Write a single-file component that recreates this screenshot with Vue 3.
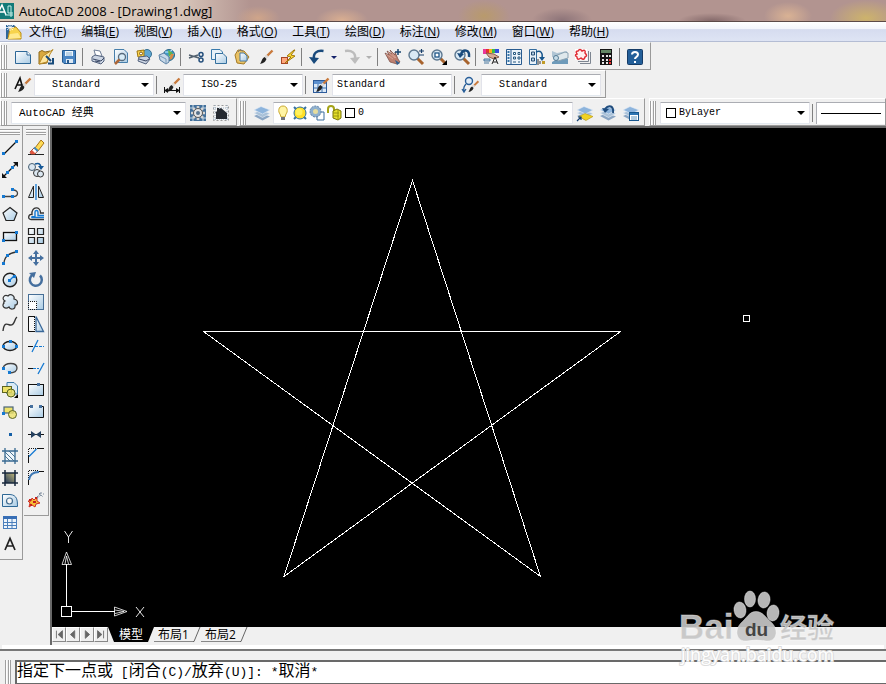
<script setup>
import { ref } from 'vue'

const menus = [
  ['文件', 'F'], ['编辑', 'E'], ['视图', 'V'], ['插入', 'I'], ['格式', 'O'], ['工具', 'T'],
  ['绘图', 'D'], ['标注', 'N'], ['修改', 'M'], ['窗口', 'W'], ['帮助', 'H'],
]

// Shared fragments for the icon set; every icon lives on a 16 x 16 grid.
const knob = (x, y) => `<rect x="${x}" y="${y}" width="3" height="3" fill="#1479d2"/>`
const brush = '<path d="M15.5 1.5L9 8" stroke="#c97a3c" stroke-width="2.4"/><path d="M10.5 6.5L8 9" stroke="#ddd" stroke-width="2.4"/><path d="M9.500 10C8 14 5 14.500 3 15C5 12.500 4.500 9.500 7.500 8z" fill="#222"/>'
const layers = '<path d="M0 11L7 8L16 11.500L8.500 15.500z" fill="#8aa5c3"/><path d="M0 8L7 5L16 8.500L8.500 12.500z" fill="#a9c1d8" stroke="#e7eff7" stroke-width=".6"/><path d="M0 5L7 1.500L16 5L8.500 9z" fill="#8db4dc" stroke="#e7eff7" stroke-width=".6"/>'
const lens = '<path d="M9 9L15 15" stroke="#a8642e" stroke-width="3"/><circle cx="6" cy="6" r="5" fill="#d9e9f5" stroke="#5d7890" stroke-width="1.400"/>'

const icons = {
  new: '<path d="M.5 2.500H12L15.500 6V14.500H.5z" fill="url(#paper)" stroke="#2d6797"/><path d="M12 2.500V6H15.500" fill="#fff" stroke="#2d6797"/>',
  open: '<path d="M1 3L4 1.500L7 3L12 2L9 14L1 15z" fill="#d9a93f" stroke="#8f6a1c"/><path d="M1 15L5 7L15 .500L12 5L9 13z" fill="#ffe7a0" stroke="#b78927"/><path d="M8 7L13 12M15 9V14.500H10" fill="none" stroke="#174a7a" stroke-width="2"/>',
  save: '<path d="M1.500 1.500H14.500V14.500H3L1.500 13z" fill="#4a86c4" stroke="#235a91"/><path d="M4 2H12V7H4z" fill="#eef6fc"/><path d="M5 4H11M5 6H11" stroke="#8ab0d1"/><path d="M5 10H12V14H5z" fill="#dce8f3"/><path d="M6 11H8V14H6z" fill="#285a8d"/>',
  print: '<path d="M4 1L10 2L12 7L6 8z" fill="#fff" stroke="#6e7d96"/><path d="M2 8L5 6L14 8V12L11 15L2 12z" fill="#ccd5e3" stroke="#53627d"/><path d="M3 10L11 12L14 9M5 12L10 13" stroke="#394764" fill="none"/>',
  preview: '<path d="M1.500 .5H11L14.500 4V13.500H1.500z" fill="url(#paper)" stroke="#477fab"/><circle cx="9" cy="8" r="3.500" fill="#d9edf8" stroke="#576b7d" stroke-width="1.300"/><path d="M6.500 10.500L2 15" stroke="#ad6738" stroke-width="2.500"/>',
  publish: '<circle cx="11" cy="5" r="4.500" fill="#5fa7d1" stroke="#356e91"/><path d="M1 2L8 1V8H2z" fill="#ffd64e" stroke="#9c750e"/><circle cx="5" cy="4.500" r="1.500" fill="#fff" stroke="#7b5a10"/><path d="M3 8L11 7L14 10L10 15L2 12z" fill="#ccd5e3" stroke="#53627d"/><path d="M3 10L10 12L13 10" fill="none" stroke="#394764"/>',
  web: '<circle cx="10" cy="6" r="5.500" fill="#3a9bcb" stroke="#286386"/><path d="M6 3Q11 4 13 1M5 7Q11 9 15 5" stroke="#cfefff" fill="none"/><path d="M9 1L14 4L10 8z" fill="#63b24d"/><path d="M12 5L15 5L13 10L10 11z" fill="#db8a44"/><path d="M0 6L5 4L10 8V13L7 15L1 11z" fill="#c8d9e9" stroke="#5b80a4"/><path d="M1 7L7 10V15" fill="none" stroke="#7698b8"/>',
  cut: '<path d="M1 6L11 9M1 9L10 6" stroke="#52616e" stroke-width="1.500"/><circle cx="13" cy="5.500" r="2" fill="none" stroke="#254f7b" stroke-width="1.500"/><circle cx="13" cy="11" r="2" fill="none" stroke="#254f7b" stroke-width="1.500"/>',
  copy: '<path d="M.5 .5H9L11.500 3V10.500H.5z" fill="#e8f2f8" stroke="#397aac"/><path d="M4.500 4.500H12L15.500 8V14.500H4.500z" fill="url(#paper)" stroke="#34709e"/>',
  paste: '<path d="M4 1L10 2L15 8L10 15L3 14L1 6z" fill="#e9c163" stroke="#a47a24"/><path d="M6 4H10L13 7V12L6 12z" fill="url(#paper)" stroke="#487ba6"/><path d="M4 3L6 .500L9 2" stroke="#777" fill="none"/>',
  match: brush,
  blockedit: '<rect x="1.500" y="8.500" width="6" height="6" fill="#ffa77c" stroke="#a84625"/><path d="M14 1L7 7L11 8L5 14L15 7L11 6L15 1z" fill="#ffdf36" stroke="#a2770b"/>',
  undo: '<path d="M14.500 2C8 1 4 4 5 10" fill="none" stroke="#194a7c" stroke-width="2.500"/><path d="M0 8L10 9L5 15z" fill="#194a7c"/>',
  redo: '<path d="M1 2C8 1 12 4 11 10" fill="none" stroke="#bcbcbc" stroke-width="2.500"/><path d="M6 9L16 8L11 15z" fill="#bcbcbc"/>',
  pan: '<path d="M0 4L4 6L2 2L7 5L5 1L10 6L10 3L13 10L15 13L12 15L5 13z" fill="#bd8070" stroke="#76483f" stroke-width=".7"/><path d="M1 5L8 10M3 3L10 9M6 3L11 9" stroke="#e3b1a2" stroke-width=".7"/><path d="M10 11L15 14L12 16z" fill="#315e8d"/><path d="M13 0V6M10 3H16" stroke="#18466f" stroke-width="1.500"/>',
  zoomrt: lens + '<path d="M11 2H16M13.500 0V4M11 6H16" stroke="#173c68" stroke-width="1.200"/>',
  zoomwin: lens + '<rect x="4" y="4" width="4" height="4" fill="#fff" stroke="#205687" stroke-width="1.300"/><path d="M16 11V16H11z" fill="#000"/>',
  zoomprev: lens + '<path d="M15 8C16 0 9 0 7 5" fill="none" stroke="#194a7c" stroke-width="2.500"/><path d="M3 4L10 5L6 9z" fill="#194a7c"/>',
  props: '<path d="M0 0H3V5H0z" fill="#e9369b"/><path d="M3 0H6V5H3z" fill="#e63131"/><path d="M6 0H9V4H6z" fill="#ffb019"/><path d="M9 0H12V4H9z" fill="#38bf49"/><path d="M12 0H16V4H12z" fill="#334ee0"/><path d="M3 4L11 5L16 8L11 10L6 8z" fill="#dbaa93" stroke="#885c4b"/><path d="M1 10H7V12H1zM1 14H6" fill="#b7d0e6" stroke="#48779d"/><path d="M9 15L12 8L15 15M10 13H14" fill="none" stroke="#222"/>',
  center: '<path d="M.5 .5H15.500V15.500H.5z" fill="#edf4fa" stroke="#285b8f"/><path d="M2.500 2V14" stroke="#3775a8" stroke-width="2" stroke-dasharray="2 1"/><path d="M5 .5V15" stroke="#285b8f"/><path d="M7.500 3.500H9.500V5.500H7.500zM12 3.500H14V5.500H12zM7.500 8H9.500V10H7.500zM12 8H14V10H12zM7 13H10M12 13H14" fill="#fff" stroke="#24577e"/>',
  palettes: '<path d="M.5 .5H7.500V15.500H.5z" fill="#e8f1f9" stroke="#346c9e"/><path d="M2.500 3H5.500V6H2.500zM2.500 9H5.500V12H2.500z" fill="#b7cee2" stroke="#254c73"/><path d="M7 3C12 1 14 4 13 9" fill="none" stroke="#18578d" stroke-width="1.500"/><path d="M10 8H16L13 12z" fill="#18578d"/><path d="M9 10V16M11 12V15" stroke="#333"/><rect x="13" y="12" width="3" height="3" fill="#c19b26"/>',
  sheets: '<path d="M0 2L5 4L15 2V8L9 11L0 8z" fill="#b0c5d4"/><path d="M0 13L9 8L16 10V15H0z" fill="#6f9bba"/><path d="M3 7L13 3L16 4V9L6 12z" fill="#dfe8ec" stroke="#8aa2b2"/><circle cx="4" cy="9" r="2.500" fill="#c7dce8" stroke="#577d96"/>',
  markup: '<path d="M5 14.500H15.500V3M3 12.500H13.500V2" stroke="#7d8590" fill="none"/><rect x="0" y="0" width="12" height="11" fill="#fff"/><path d="M3 2Q5-1 7 2Q11 0 10 4Q13 7 10 8Q9 12 6 9Q2 12 2 8Q-1 6 2 5Q0 2 3 2z" fill="#fff1f0" stroke="#e02e35" stroke-width="1.500"/>',
  calc: '<rect x="2" y="0" width="12" height="16" fill="#151515"/><rect x="3" y="1" width="10" height="3" fill="#638865"/><path d="M4 6H6V8H4zM8 6H10V8H8zM11 6H13V8H11zM4 10H6V12H4zM8 10H10V12H8zM4 13H6V15H4zM8 13H10V15H8z" fill="#e8e8e8"/><path d="M11 10H13V12H11zM11 13H13V15H11z" fill="#e33"/>',
  help: '<rect x=".5" y=".5" width="15" height="15" rx="1" fill="#235f99" stroke="#153b66"/><path d="M5 5.500C5 2 11 2 11 5.500C11 8 8 8 8 10" fill="none" stroke="#fff" stroke-width="2"/><rect x="7" y="12" width="2" height="2" fill="#fff"/>',
  textstyle: '<path d="M0 12L5 1L8 12M2 8H8" fill="none" stroke="#111" stroke-width="1.600"/>' + brush,
  dimstyle: brush + '<path d="M0 13.500H16M.5 10V16M15.500 10V16" stroke="#111"/><path d="M0 13.500L4 11V16zM16 13.500L12 11V16z" fill="#111"/>',
  tablestyle: '<rect x=".5" y="3.500" width="13" height="12" fill="#dbe9f7" stroke="#2d5c9b"/><path d="M1 4H13V7H1z" fill="#5d91d0"/><path d="M1 11H13M5 7V15M9 7V15" stroke="#3e72ae"/>' + brush,
  leaderstyle: '<circle cx="7" cy="4" r="3.500" fill="#e2edf7" stroke="#285e98" stroke-width="1.400"/><path d="M4 7Q1 10 2 14M0 12L2 15L4 12" fill="none" stroke="#285e98" stroke-width="1.300"/><g transform="translate(4 3) scale(.8)">' + brush + '</g>',
  gear: '<rect width="16" height="16" fill="#43709b"/><path d="M0 3H3V0M13 0V3H16M0 13H3V16M13 16V13H16" stroke="#c5d8e6" fill="none"/><path d="M8 1V15M1 8H15M3 3L13 13M13 3L3 13" stroke="#d5d5d5" stroke-width="2.600"/><circle cx="8" cy="8" r="4.500" fill="#e4e4e4" stroke="#555"/><circle cx="8" cy="8" r="2" fill="#56718c"/>',
  home: '<rect x=".5" y=".5" width="15" height="15" fill="#f4f4f4" stroke="#9a9a9a" stroke-dasharray="2 2"/><path d="M2 0V16M14 0V16M0 3H16M0 14H16" stroke="#9fb2c4" stroke-dasharray="1 1"/><path d="M2 8L4 6V3H6V4L8 3L14 8V14H3V8z" fill="#252a31"/>',
  layers,
  layercur: layers + '<path d="M2 11.500L8 8.500L16 11.500L9 15.500z" fill="#f0d223" stroke="#b49308" stroke-width=".5"/><path d="M0 16L4 12M1 12H4V15" stroke="#123f72" fill="none" stroke-width="1.200"/>',
  layerprev: layers + '<path d="M13 8C14 1 9-1 5 4" stroke="#204d7e" stroke-width="2" fill="none"/><path d="M2 3L9 4L5 8z" fill="#204d7e"/>',
  layerstates: layers + '<rect x="6.500" y="7.500" width="9" height="8" fill="#fff" stroke="#16568d"/><path d="M7 8H15V10H7z" fill="#2d75b3"/><path d="M8 12H14M8 14H14" stroke="#6095be"/>',
  bulb: '<path d="M8 1C3 1 3 7 5 9L6 12H10L11 9C13 7 13 1 8 1z" fill="#fff4a4" stroke="#c9a830"/><path d="M6 12H10V15H6z" fill="#70737b"/>',
  sun: '<path d="M2 2L14 14M14 2L2 14" stroke="#3470a1" stroke-width="2"/><circle cx="8" cy="8" r="6" fill="#ffdf27" stroke="#2f719e"/><circle cx="7" cy="7" r="3.500" fill="#fff25c"/>',
  freeze: '<path d="M9 7H15V15H8V11" fill="#fff" stroke="#3b6d9d"/><circle cx="6.500" cy="6.500" r="5.500" fill="#8fb0ce" stroke="#5d82a7" stroke-dasharray="2 1"/><circle cx="6.500" cy="6.500" r="2.500" fill="#e6dd9d"/>',
  lock: '<path d="M2 8V4C2 0 8 0 8 4V9" fill="none" stroke="#a5a318" stroke-width="2"/><path d="M7 6L11 4L15 6V13L12 15L7 13z" fill="#e6df2d" stroke="#78740b"/><path d="M7 8H13M7 11H13M12 5V15" stroke="#9a9613"/>',
  line: '<path d="M2 14L14 2" stroke="#111" stroke-width="1.300"/>' + knob(0, 12) + knob(13, 0),
  xline: '<path d="M1 15L15 1" stroke="#111" stroke-width="1.300"/><path d="M0 16V11L5 16zM16 0V5L11 0z" fill="#111"/>' + knob(4, 9) + knob(9, 4),
  pline: '<path d="M2 12.500H11C17 12.500 17 6 11 6" fill="none" stroke="#444" stroke-width="1.300"/>' + knob(0, 11) + knob(9, 11) + knob(9, 4),
  polygon: '<path d="M8 1.500L15 7L12 14.500H4L1 7z" fill="url(#paper)" stroke="#222" stroke-width="1.200"/>',
  rect: '<rect x="1.500" y="4.500" width="13" height="8" fill="url(#paper)" stroke="#111" stroke-width="1.300"/>' + knob(0, 11) + knob(13, 3),
  arc: '<path d="M2 14Q2 4 14 2" fill="none" stroke="#333" stroke-width="1.300"/>' + knob(0, 12) + knob(4, 4) + knob(13, 0),
  circle: '<circle cx="8" cy="8" r="6.800" fill="url(#paper)" stroke="#222" stroke-width="1.400"/><path d="M8 8L12 4" stroke="#1479d2" stroke-width="1.300"/>' + knob(6, 7) + knob(11, 3),
  cloud: '<path d="M3 7C-1 5 2 0 6 2C9-1 13 2 12 5C17 6 16 11 13 11C14 16 8 16 7 13C3 16-1 12 2 9Q1 8 3 7z" fill="url(#paper)" stroke="#333" stroke-width="1.200"/>',
  spline: '<path d="M1 15C2 6 5 8 8 9C13 10 12 3 15 1" fill="none" stroke="#333" stroke-width="1.400"/>',
  ellipse: '<ellipse cx="8" cy="8" rx="7" ry="4.500" fill="url(#paper)" stroke="#222" stroke-width="1.400"/>' + knob(0, 7) + knob(7, 2) + knob(13, 7),
  elarc: '<path d="M1 8C3 2 15 2 15 8C15 12 12 13 7 13" fill="url(#paper)" stroke="#444" stroke-width="1.300"/>' + knob(0, 7) + knob(6, 11),
  insert: '<path d="M5 .5H12L15.500 4V12H5z" fill="#d9eaf6" stroke="#3979a8"/><rect x=".5" y="4.500" width="9" height="6" fill="#ede269" stroke="#5d6420"/><circle cx="9" cy="11" r="4" fill="#e6dc63" fill-opacity=".85" stroke="#53621c"/><path d="M16 12V16H12z" fill="#000"/>',
  block: '<rect x="2" y="3" width="9" height="6" fill="#eee269" stroke="#496477" stroke-width="1.200"/><circle cx="10.500" cy="10.500" r="4" fill="#eee269" fill-opacity=".8" stroke="#5c6525"/>' + knob(0, 8),
  point: '<rect x="7" y="7" width="3" height="3" fill="#155fa7"/>',
  hatch: '<rect x="3" y="3" width="10" height="10" fill="#eef5fa"/><path d="M3 8L8 13M3 4L12 13M7 3L13 9" stroke="#4c7493"/><path d="M3 0V16M13 0V16M0 3H16M0 13H16" stroke="#386a92" stroke-width="1.300"/>',
  gradient: '<rect x="3" y="3" width="10" height="10" fill="url(#dusk)"/><path d="M3 0V16M13 0V16M0 3H16M0 13H16" stroke="#18283d" stroke-width="1.500"/>',
  region: '<path d="M.5 2.500H8C15 3 15.500 8 15.500 14.500H.5z" fill="url(#paper)" stroke="#2e6896"/><circle cx="7.500" cy="9" r="3" fill="#f7f7f7" stroke="#446e91" stroke-width="1.200"/>',
  table: '<rect x="1.500" y="2.500" width="13" height="12" fill="#edf4fb" stroke="#4b7fbc"/><path d="M1 2H15V5H1z" fill="#376eb5"/><path d="M1 8.500H15M1 11.500H15M5.500 5V15M10 5V15" stroke="#4b7fbc"/>',
  mtext: '<path d="M3 14L8 2.500L13 14M5 10H11" fill="none" stroke="#222" stroke-width="1.700"/>',
  erase: '<path d="M0 14.500H16" stroke="#222"/><path d="M7 8L13 0L16 3L10 11z" fill="#ffdb55" stroke="#a77417"/><path d="M2 12L6 8L9.500 11L7 14H3z" fill="#fff" stroke="#9c4a3b"/><path d="M2 12L4 10L7.500 13.500L7 14H3z" fill="#e0563f"/><path d="M6 7.500L10 11" stroke="#4189bc" stroke-width="2"/>',
  copyobj: '<circle cx="4" cy="5" r="3.500" fill="#dbe7f1" stroke="#475f73"/><circle cx="9" cy="11" r="3.500" fill="#dbe7f1" stroke="#333"/><circle cx="12.500" cy="12" r="3" fill="#dbe7f1" stroke="#333"/><path d="M7 2Q12 0 13 5" fill="none" stroke="#145796" stroke-width="1.500"/><path d="M10 4H16L13 8z" fill="#145796"/>',
  mirror: '<path d="M5.500 2V13.500H.5zM10.500 2V13.500H15.500z" fill="url(#paper)" stroke="#222"/><path d="M8 0V16" stroke="#1479d2" stroke-width="1.300"/>',
  offset: '<path d="M16 13.500H3C-.5 13.500 0 8 4 8.500C3 0 13 0 12.500 7H16" fill="none" stroke="#333" stroke-width="1.300"/><path d="M16 11.500H4C3 10.500 5 10.500 7 10.500V6C7 4 10 4 10 6V9.500H16" fill="none" stroke="#1479d2" stroke-width="1.400"/>',
  array: '<path d="M.5 .5H6.500V6.500H.5zM9.500 .5H15.500V6.500H9.500zM.5 9.500H6.500V15.500H.5zM9.500 9.500H15.500V15.500H9.500z" fill="url(#paper)" stroke="#222" stroke-width="1.200"/>',
  move: '<path d="M8 0L11 4H9V7H12V5L16 8L12 11V9H9V12H11L8 16L5 12H7V9H4V11L0 8L4 5V7H7V4H5z" fill="#456f9e"/>',
  rotate: '<path d="M5 2.500A6 6 0 1 0 12 3.500" fill="none" stroke="#456f9e" stroke-width="2.500"/><path d="M1 1L8 0L6 6z" fill="#456f9e"/>',
  scale: '<rect x=".5" y=".5" width="15" height="15" fill="url(#paper)" stroke="#466e96"/><path d="M.5 7.500H8.500V15.500H.5z" fill="#fff" stroke="#111" stroke-dasharray="1 1" stroke-dashoffset=".5"/>',
  stretch: '<path d="M8 .5L15.500 15.500H8z" fill="url(#paper)" stroke="#396798" stroke-width="1.300"/><path d="M7 .5H.5V15.500H7" fill="#f8f8f8" stroke="#111"/><path d="M6.500 1V15" stroke="#111" stroke-dasharray="1 1"/>',
  trim: '<path d="M0 8.500H5" stroke="#111"/><path d="M7 8.500H16" stroke="#1479d2" stroke-dasharray="3 1"/><path d="M4 14L10 2" stroke="#1479d2" stroke-width="1.300"/>',
  extend: '<path d="M0 8.500H5" stroke="#111"/><path d="M5 8.500H11" stroke="#1479d2" stroke-dasharray="3 1"/><path d="M10 14L16 3" stroke="#1479d2" stroke-width="1.300"/>',
  breakpt: '<rect x=".5" y="2.500" width="15" height="11" fill="url(#paper)" stroke="#111"/><rect x="9" y="1" width="3" height="3" fill="#456f9e"/>',
  break: '<path d="M3 2.500H.5V13.500H15.500V2.500H13" fill="url(#paper)" stroke="#111"/><path d="M2 1H5V4H2zM11 1H14V4H11z" fill="#456f9e"/>',
  join: '<path d="M0 8.500H16" stroke="#111"/><path d="M3 5L8 8.500L3 12zM13 5L8 8.500L13 12z" fill="#24405f"/>',
  chamfer: '<path d="M.5 15V8M9 .5H16" stroke="#111"/><path d="M.5 8V.5H9" stroke="#111" fill="none" stroke-dasharray="1 1"/><path d="M1 8.500L8.500 1" stroke="#1479d2" stroke-width="1.300"/>',
  fillet: '<path d="M.5 15V9M11 1.500H16" stroke="#111"/><path d="M.5 8V.5H10" stroke="#111" fill="none" stroke-dasharray="1 1"/><path d="M1 10Q2 2 11 2" stroke="#3d78b5" stroke-width="2" fill="none"/>',
  explode: '<path d="M4 6L6 8L9 5L9 9L12 11L8 12L7 15L4 13L1 15L2 11L0 9L3 9z" fill="#f5bd35" stroke="#cf2d25"/><path d="M1 7H3V9H1zM5 9H8V11H5zM2 12H4V14H2zM7 5H9V7H7z" fill="#c61f1f"/><path d="M9 5L13 1M11 1L15 5M9 6L13 3M13 0V2M15 2H16" stroke="#7c8b9d" stroke-dasharray="2 1"/>',
}

const standardBar = [
  ['new', 'open', 'save'],
  ['print', 'preview', 'publish', 'web'],
  ['cut', 'copy', 'paste', 'match', 'blockedit'],
  ['undo', 'caret', 'redo', 'caret-off'],
  ['pan', 'zoomrt', 'zoomwin', 'zoomprev'],
  ['props', 'center', 'palettes', 'sheets', 'markup', 'calc'],
  ['help'],
]
const styleBar = [
  { icon: 'textstyle', label: '文字样式', value: 'Standard', inset: true },
  { icon: 'dimstyle', label: '标注样式', value: 'ISO-25', inset: true },
  { icon: 'tablestyle', label: '表格样式', value: 'Standard', inset: false },
  { icon: 'leaderstyle', label: '多重引线样式', value: 'Standard', inset: true },
]
const drawTools = ['line', 'xline', 'pline', 'polygon', 'rect', 'arc', 'circle', 'cloud', 'spline', 'ellipse', 'elarc', 'insert', 'block', 'point', 'hatch', 'gradient', 'region', 'table', 'mtext']
const modifyTools = ['erase', 'copyobj', 'mirror', 'offset', 'array', 'move', 'rotate', 'scale', 'stretch', 'trim', 'extend', 'breakpt', 'break', 'join', 'chamfer', 'fillet', 'explode']
const layerFlags = ['bulb', 'sun', 'freeze', 'lock']

const pagers = ['M4 2V11M11 2L6 6.500L11 11z', 'M9 2L4 6.500L9 11z', 'M5 2L10 6.500L5 11z', 'M3 2L8 6.500L3 11zM10 2V11']
const layouts = ['布局1', '布局2']
const activeTab = ref('模型')
</script>

<template>
  <div class="app">
    <header class="title">
      <svg class="logo" viewBox="0 0 14 16" aria-hidden="true">
        <rect width="14" height="16" fill="#127a78" />
        <path d="M-3 12L2 2L6 12M-1 9H5" fill="none" stroke="#fff" stroke-width="1.500" />
        <path d="M8 3V10H13M8 3H11V14M5 12H13" fill="none" stroke="#c5f0e8" />
      </svg>
      <h1>AutoCAD 2008 - [Drawing1.dwg]</h1>
    </header>

    <nav class="menu">
      <svg class="doc" viewBox="0 0 16 16" aria-hidden="true">
        <path d="M0 1H8L12 5V15H0z" fill="#2d659a" />
        <path d="M4 4L10 3L15 9V15H2z" fill="#f7d34c" stroke="#bb8c16" />
        <path d="M2 15L4 10L12 9L15 14z" fill="#ffe98d" />
        <path d="M4 0V7M0 3.500H8M1 1L7 6M7 1L1 6" stroke="#fff" stroke-width=".8" />
      </svg>
      <button v-for="[name, key] in menus" :key="key" type="button">{{ name }}(<u>{{ key }}</u>)</button>
    </nav>

    <div class="bars">
      <div class="row">
        <div class="bar">
          <i class="grip"></i>
          <div v-for="(group, g) in standardBar" :key="g" class="group">
            <template v-for="name in group" :key="name">
              <button v-if="name.startsWith('caret')" type="button" class="caret" :class="{ off: name === 'caret-off' }" :aria-label="name"></button>
              <button v-else type="button" class="tool" :aria-label="name"><svg viewBox="0 0 16 16" v-html="icons[name]"></svg></button>
            </template>
          </div>
        </div>
      </div>

      <div class="row">
        <div class="bar">
          <i class="grip"></i>
          <div v-for="s in styleBar" :key="s.icon" class="group">
            <button type="button" class="tool" :aria-label="s.icon"><svg viewBox="0 0 16 16" v-html="icons[s.icon]"></svg></button>
            <label class="combo style" :class="{ inset: s.inset }">
              <select :aria-label="s.label"><option>{{ s.value }}</option></select>
            </label>
          </div>
        </div>
      </div>

      <div class="row">
        <div class="bar">
          <i class="grip"></i>
          <label class="combo workspace"><select aria-label="工作空间"><option>AutoCAD 经典</option></select></label>
          <button type="button" class="tool" aria-label="工作空间设置"><svg viewBox="0 0 16 16" v-html="icons.gear"></svg></button>
          <button type="button" class="tool" aria-label="我的工作空间"><svg viewBox="0 0 16 16" v-html="icons.home"></svg></button>
        </div>
        <div class="bar layerbar">
          <i class="grip"></i>
          <button type="button" class="tool" aria-label="图层特性"><svg viewBox="0 0 16 16" v-html="icons.layers"></svg></button>
          <label class="combo layer">
            <select aria-label="图层"><option>0</option></select>
            <span class="flags">
              <svg v-for="f in layerFlags" :key="f" viewBox="0 0 16 16" v-html="icons[f]"></svg>
              <i class="swatch"></i>
            </span>
          </label>
          <button v-for="n in ['layercur', 'layerprev', 'layerstates']" :key="n" type="button" class="tool" :aria-label="n"><svg viewBox="0 0 16 16" v-html="icons[n]"></svg></button>
        </div>
        <div class="bar fill">
          <i class="grip"></i>
          <div class="group">
            <label class="combo color">
              <select aria-label="颜色"><option>ByLayer</option></select>
              <span class="flags"><i class="swatch"></i></span>
            </label>
          </div>
          <div class="group rest">
            <div class="linetype"></div>
          </div>
        </div>
      </div>
    </div>

    <main class="work">
      <div class="dock">
        <div v-for="(tools, i) in [drawTools, modifyTools]" :key="i" class="column">
          <i class="vgrip"></i>
          <button v-for="t in tools" :key="t" type="button" class="tool" :aria-label="t"><svg viewBox="0 0 16 16" v-html="icons[t]"></svg></button>
        </div>
      </div>

      <section class="viewport">
        <svg class="canvas" aria-label="Drawing1">
          <defs>
            <linearGradient id="paper" x1="0" y1="0" x2="1" y2="1"><stop offset="0" stop-color="#fff" /><stop offset="1" stop-color="#a9cbe4" /></linearGradient>
            <linearGradient id="dusk" x1="0" y1="1" x2="1" y2="0"><stop offset="0" stop-color="#203659" /><stop offset="1" stop-color="#c3b978" /></linearGradient>
          </defs>
          <g fill="none" stroke="#fff" shape-rendering="crispEdges">
            <path d="M360.500 52.500L232 448.500L568.500 203.500H151.500L488.500 448.500z" />
            <rect x="691.500" y="187.500" width="6" height="6" />
            <rect x="9.500" y="478.500" width="10" height="10" />
            <path d="M14.500 478V436M20 483.500H63" />
          </g>
          <g fill="none" stroke="#fff">
            <path d="M14.500 424L10 436.500H19.500zM13 436L14.500 428L16.500 436M75 483.500L62.500 479V488zM63 482L72 483.500L63 485.500" stroke-width=".8" />
            <path d="M12.500 403L16.500 409V415M20.500 403L16.500 409M84 479L92 489M92 479L84 489" stroke-width=".9" />
          </g>
        </svg>
        <div class="tabs">
          <button v-for="(d, i) in pagers" :key="i" type="button" class="pager" aria-label="翻页">
            <svg viewBox="0 0 14 13"><path :d="d" fill="#666" stroke="#666" /></svg>
          </button>
          <button type="button" class="model" @click="activeTab = '模型'">模型</button>
          <template v-for="t in layouts" :key="t">
            <button type="button" class="layout" @click="activeTab = t">{{ t }}</button>
            <svg class="slash" viewBox="0 0 8 15"><path d="M0 14.500H1L7 0" stroke="#666" fill="none" /></svg>
          </template>
        </div>
      </section>
    </main>

    <footer class="command">
      <i class="grip"></i>
      <p class="history">指定下一点或<code>&nbsp;[</code>闭合<code>(C)/</code>放弃<code>(U)]:&nbsp;*</code>取消<code>*</code></p>
    </footer>

    <svg class="watermark" viewBox="0 0 170 84">
      <g fill="#c6c6c6" fill-opacity=".92" stroke="#fff" stroke-opacity=".4">
        <ellipse cx="64" cy="21" rx="6" ry="8" transform="rotate(-8 64 21)" />
        <ellipse cx="74" cy="10" rx="5.500" ry="8" />
        <ellipse cx="88" cy="11" rx="6" ry="8" transform="rotate(8 88 11)" />
        <ellipse cx="97" cy="24" rx="6" ry="8" transform="rotate(8 97 24)" />
        <path d="M80 22.500C87 22.500 90 29 96 34C103 41 101 53 90 52Q80 50 71 52C60 53 58 41 65 34C71 29 73 22.500 80 22.500z" />
        <text x="3" y="50" class="wm-latin">Bai</text>
        <text x="104" y="49" class="wm-cjk">经验</text>
      </g>
      <text x="69" y="47" class="wm-du">du</text>
      <text x="5" y="72" class="wm-url">jingyan.baidu.com</text>
    </svg>
  </div>
</template>

<style>
body {
  margin: 0;
  background: #f0f0f0;
}
</style>

<style scoped>
.app {
  position: relative;
  display: flex;
  flex-direction: column;
  min-height: 100vh;
  overflow: hidden;
  background: #f0f0f0;
  color: #000;
  font: 12px/16px "Open Sans", "Noto Sans CJK SC", sans-serif;
}
button {
  margin: 0;
  padding: 0;
  border: 0;
  background: none;
  color: inherit;
  font: inherit;
}
svg {
  display: block;
}
.title {
  box-sizing: border-box;
  display: flex;
  align-items: center;
  gap: 5px;
  height: 22px;
  border-bottom: 1px solid #5c4a48;
  background:
    radial-gradient(ellipse 26px 12px at 342px 20px, #d9ae91, transparent),
    radial-gradient(ellipse 22px 12px at 258px 18px, #cfa58a, transparent),
    radial-gradient(ellipse 26px 16px at 484px 16px, #b89a6c, transparent),
    radial-gradient(ellipse 30px 12px at 562px 20px, #8d7479, transparent),
    radial-gradient(ellipse 34px 8px at 712px 21px, #84696a, transparent),
    radial-gradient(ellipse 24px 14px at 788px 16px, #d9b294, transparent),
    radial-gradient(ellipse 36px 18px at 866px 18px, #cdb36c, transparent),
    linear-gradient(90deg, #dccdbd, #d8c6ba 180px, #b29490 250px, #b29490);
}
.title h1 {
  margin: 0;
  font-size: 13px;
  font-weight: 400;
}
.logo {
  width: 14px;
  height: 16px;
}
.menu {
  box-sizing: border-box;
  display: flex;
  align-items: center;
  gap: 15px;
  height: 20px;
  padding-left: 6px;
  border-bottom: 1px solid #b4bdd4;
  background: linear-gradient(#fff, #f3f5fb 35%, #d6dcef 40%, #dee4f4);
  white-space: nowrap;
}
.doc {
  width: 16px;
  height: 16px;
  margin-right: -8px;
}
.row {
  display: flex;
  height: 28px;
}
.bar {
  box-sizing: border-box;
  display: flex;
  align-items: center;
  padding: 2px 4px 0 0;
  border: 1px solid;
  border-color: #fff #9a9a9a #9a9a9a #fff;
}
.bar.layerbar {
  margin-left: 2px;
  padding-right: 2px;
}
.bar.fill {
  flex: 1;
  margin-left: 4px;
  padding-right: 0;
}
.grip {
  box-sizing: border-box;
  flex: none;
  width: 6px;
  height: 24px;
  margin-right: 4px;
  border: solid #a0a0a0;
  border-width: 0 1px;
  background: linear-gradient(90deg, #fff 1px, #f0f0f0 1px 2px, #a0a0a0 2px 3px, #fff 3px);
}
.group {
  display: flex;
  align-items: center;
}
.group.rest {
  flex: 1;
}
.group + .group::before {
  content: "";
  width: 1px;
  height: 18px;
  margin: 0 3px 0 2px;
  background: #808080;
}
.tool {
  display: grid;
  flex: none;
  place-items: center;
  width: 23px;
  height: 22px;
}
.tool svg {
  width: 16px;
  height: 16px;
  overflow: visible;
}
.caret {
  display: grid;
  place-items: center;
  width: 12px;
  height: 22px;
}
.caret::after,
.combo::after {
  content: "";
  border: solid transparent;
  border-width: 4px 4px 0;
  border-top-color: #000;
}
.caret::after {
  border-width: 3px 3px 0;
  border-top-color: #15236b;
}
.caret.off::after {
  border-top-color: #b0b0b0;
}
.combo {
  display: grid;
  align-items: center;
}
.combo::after {
  grid-area: 1 / 1;
  justify-self: end;
  margin-right: 5px;
  pointer-events: none;
}
.combo select {
  grid-area: 1 / 1;
  box-sizing: border-box;
  width: 100%;
  height: 22px;
  padding: 0 4px;
  border: 1px solid;
  border-color: #abadb3 #e2e3ea #e3e9ef #e2e3ea;
  border-radius: 1px;
  background: #fff;
  color: #000;
  font: 10px/18px "Liberation Mono", "Noto Sans CJK SC", monospace;
  appearance: none;
}
.combo.style {
  width: 120px;
}
.combo.inset select {
  padding-left: 17px;
}
.combo.workspace {
  width: 175px;
}
.combo.workspace select {
  padding-left: 7px;
  font-size: 11px;
}
.combo.layer {
  width: 300px;
}
.combo.layer select {
  padding-left: 84px;
}
.combo.layer .flags {
  padding-left: 2px;
}
.combo.color {
  width: 150px;
}
.combo.color select {
  padding-left: 18px;
}
.flags {
  grid-area: 1 / 1;
  display: flex;
  align-items: center;
  gap: 1px;
  width: max-content;
  padding-left: 4px;
  pointer-events: none;
}
.flags svg {
  width: 16px;
  height: 16px;
}
.swatch {
  box-sizing: border-box;
  width: 10px;
  height: 10px;
  margin-left: 2px;
  border: 1px solid #000;
}
.linetype {
  box-sizing: border-box;
  display: flex;
  flex: 1;
  align-items: center;
  height: 22px;
  padding: 0 4px;
  border: solid #abadb3;
  border-width: 1px 0 0 1px;
  background: #fff;
}
.linetype::before {
  content: "";
  width: 60px;
  height: 1px;
  background: #000;
}
.work {
  display: flex;
  flex: 1;
}
.dock {
  display: flex;
  align-items: flex-start;
  gap: 1px;
  padding-right: 1px;
}
.column {
  box-sizing: border-box;
  display: flex;
  flex-direction: column;
  align-items: center;
  width: 25px;
  padding: 3px 0 4px;
  border-right: 1px solid #9a9a9a;
  border-bottom: 1px solid #9a9a9a;
}
.column:first-child {
  width: 23px;
  padding-right: 3px;
}
.vgrip {
  box-sizing: border-box;
  width: 20px;
  height: 6px;
  margin-bottom: 2px;
  border: solid #a0a0a0;
  border-width: 1px 0;
  background: linear-gradient(#fff 1px, #f0f0f0 1px 2px, #a0a0a0 2px 3px, #fff 3px);
}
.viewport {
  display: flex;
  flex: 1;
  flex-direction: column;
  min-width: 0;
  border-top: 2px solid #696969;
  border-left: 2px solid #696969;
}
.canvas {
  flex: 1;
  width: 100%;
  height: 0;
  min-height: 499px;
  background: #000;
}
.tabs {
  display: flex;
  height: 15px;
  margin-bottom: 5px;
  background: #f0f0f0;
}
.tabs button {
  line-height: 15px;
}
.pager {
  box-sizing: border-box;
  width: 14px;
  height: 15px;
  border: 1px solid;
  border-color: #fff #888 #888 #fff;
}
.pager svg {
  width: 12px;
  height: 13px;
}
.model {
  width: 46px;
  background: #000;
  color: #fff;
  clip-path: polygon(0 0, 100% 0, 40px 100%, 6px 100%);
}
.layout {
  padding: 0 4px;
  box-shadow: inset 0 -1px #888;
}
.slash {
  width: 8px;
  height: 15px;
}
.command {
  display: flex;
  height: 23px;
  margin-top: 2px;
  padding: 9px 0 2px 5px;
  border-top: 2px solid #777;
  box-shadow: 0 -6px 0 -2px #fff;
}
.history {
  box-sizing: border-box;
  flex: 1;
  height: 24px;
  margin: 0;
  border: solid #696969;
  border-width: 2px 0 1px 2px;
  background: #fff;
  font: 16px/14px "Noto Sans CJK SC", sans-serif;
  white-space: nowrap;
}
.history code {
  font: 13px/12px "Liberation Mono", monospace;
}
.watermark {
  position: absolute;
  right: 40px;
  bottom: 12px;
  width: 170px;
  height: 84px;
  overflow: visible;
  pointer-events: none;
}
.wm-latin {
  font: 700 35px "Liberation Sans", sans-serif;
}
.wm-cjk {
  font: 700 27px "Noto Sans CJK SC", sans-serif;
}
.wm-du {
  font: 700 19px "Liberation Sans", sans-serif;
  fill: #444;
}
.wm-url {
  font: 18px "Open Sans", sans-serif;
  fill: #fff;
  stroke: #dcdcdc;
  stroke-width: 2px;
  paint-order: stroke;
}
</style>
